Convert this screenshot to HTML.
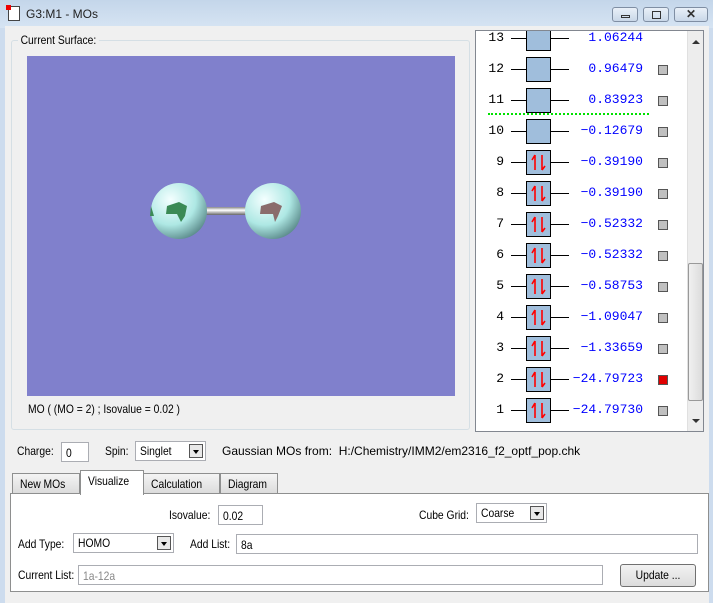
<!DOCTYPE html>
<html><head><style>
*{margin:0;padding:0;box-sizing:border-box}
body{width:713px;height:603px;overflow:hidden;background:#cddcee;font-family:"Liberation Sans",sans-serif;font-size:12px;color:#000;position:relative;white-space:nowrap}
.a{position:absolute}
.n{transform:scaleX(0.86);transform-origin:0 0}
.mono{font-family:"Liberation Mono",monospace;font-size:13px}
.inp{position:absolute;background:#fff;border:1px solid #abadb3;height:20px;padding:3px 4px;font-size:12px}
.inp span{display:inline-block;transform:scaleX(0.86);transform-origin:0 0}
.dd{position:absolute;width:14px;height:14px;border:1px solid #555;background:#e8e8e8;top:2px;right:2px}
.dd:after{content:"";position:absolute;left:3px;top:5px;border:3px solid transparent;border-top:4px solid #000}
.tab{position:absolute;top:473px;height:21px;background:linear-gradient(#f4f4f4,#dcdcdc);border:1px solid #8e8f8f;padding:3px 7px;font-size:12px}
.tab span{display:inline-block;transform:scaleX(0.86);transform-origin:0 0}
</style></head><body>
<div class="a" style="left:0;top:0;width:713px;height:28px;background:linear-gradient(#c4d6ea,#d6e4f3)"></div>
<div class="a" style="left:8px;top:6px;width:12px;height:15px;background:#fff;border:1px solid #444"></div>
<div class="a" style="left:6px;top:5px;width:5px;height:5px;background:#e00"></div>
<div class="a" style="left:26px;top:7px;font-size:12px;color:#222">G3:M1 - MOs</div>
<div class="a" style="left:612px;top:7px;width:26px;height:15px;border:1px solid #7f8ea3;border-radius:3px;background:linear-gradient(#e9f0f8,#c9d7e8)"><div class="a" style="left:8px;top:7px;width:9px;height:3px;border:1px solid #333"></div></div>
<div class="a" style="left:643px;top:7px;width:26px;height:15px;border:1px solid #7f8ea3;border-radius:3px;background:linear-gradient(#e9f0f8,#c9d7e8)"><div class="a" style="left:8px;top:3px;width:9px;height:8px;border:1px solid #333"></div></div>
<div class="a" style="left:674px;top:7px;width:34px;height:15px;border:1px solid #7f8ea3;border-radius:3px;background:linear-gradient(#e9f0f8,#c9d7e8);text-align:center;font-size:12px;font-weight:bold;line-height:13px;color:#333">✕</div>
<div class="a" style="left:5px;top:26px;width:704px;height:577px;background:#f0f0f0"></div>
<div class="a" style="left:11px;top:40px;width:459px;height:390px;border:1px solid #d5dfe5;border-radius:3px"></div>
<div class="a n" style="left:18px;top:33px;background:#f0f0f0;padding:0 3px">Current Surface:</div>
<div class="a" style="left:27px;top:56px;width:428px;height:340px;background:#8080cc"></div>
<svg class="a" style="left:27px;top:56px" width="428" height="340">
<defs><radialGradient id="g" cx="0.35" cy="0.3" r="0.75"><stop offset="0" stop-color="#f4ffff"/><stop offset="0.6" stop-color="#aee8e4"/><stop offset="1" stop-color="#5c8c8c"/></radialGradient>
<linearGradient id="r" x1="0" y1="0" x2="0" y2="1"><stop offset="0" stop-color="#888"/><stop offset="0.4" stop-color="#fff"/><stop offset="1" stop-color="#666"/></linearGradient></defs>
<rect x="175" y="151" width="48" height="8" fill="url(#r)"/>
<circle cx="152" cy="155" r="28" fill="url(#g)"/>
<circle cx="246" cy="155" r="28" fill="url(#g)"/>
<path d="M140 150 L152 146 L160 150 L158 160 L154 166 L150 158 L139 158Z" fill="#3a8a55"/>
<path d="M234 150 L247 146 L255 150 L251 160 L248 166 L246 158 L233 158Z" fill="#8a6c6c"/>
<path d="M124 150 L127 160 L123 160Z" fill="#3a8a55"/>
</svg>
<div class="a n" style="left:28px;top:402px">MO ( (MO = 2) ; Isovalue = 0.02 )</div>
<div class="a" style="left:475px;top:30px;width:229px;height:402px;background:#fff;border:1px solid #828790;overflow:hidden">
<div class="a" style="left:211px;top:0;width:17px;height:400px;background:#ededed;border-left:1px solid #e0e0e0"></div>
<div class="a" style="left:216px;top:9px;border:4px solid transparent;border-bottom:4px solid #333;border-top:0"></div>
<div class="a" style="left:216px;top:388px;border:4px solid transparent;border-top:4px solid #333;border-bottom:0"></div>
<div class="a" style="left:212px;top:232px;width:15px;height:138px;background:linear-gradient(90deg,#f0f0f0,#dcdcdc);border:1px solid #999;border-radius:2px"></div>
<div class="a" style="left:12px;top:82px;width:161px;border-top:2px dotted #00e000"></div>
<div id="rows"></div>
</div>
<script>
var v=["1.06244","0.96479","0.83923","-0.12679","-0.39190","-0.39190","-0.52332","-0.52332","-0.58753","-1.09047","-1.33659","-24.79723","-24.79730"];
var h="";
var arr='<svg width="23" height="23" style="position:absolute;left:0;top:0"><path d="M8 19 V4 M8 4 L5 9 M15 4 V19 M15 19 L18 15" stroke="#f00" stroke-width="1.6" fill="none"/></svg>';
for(var i=0;i<13;i++){var n=13-i,y=-5+31*i;
h+='<div class="a" style="left:0;top:'+(y+4)+'px;width:28px;text-align:right;font-family:Liberation Mono,monospace;font-size:13px">'+n+'</div>';
h+='<div class="a" style="left:35px;top:'+(y+12)+'px;width:58px;border-top:1px solid #000"></div>';
h+='<div class="a" style="left:50px;top:'+y+'px;width:25px;height:25px;background:#a0bedc;border:1px solid #000">'+(n<=9?arr:'')+'</div>';
h+='<div class="a mono" style="left:80px;top:'+(y+4)+'px;width:87px;text-align:right;color:#00f">'+v[i].replace('-','\u2212')+'</div>';
if(n<13)h+='<div class="a" style="left:182px;top:'+(y+8)+'px;width:10px;height:10px;background:'+(n==2?'#e00000':'#c0c0c0')+';border:1px solid #555"></div>';}
document.getElementById('rows').innerHTML=h;
</script>
<div class="a n" style="left:17px;top:444px">Charge:</div>
<div class="inp" style="left:61px;top:442px;width:28px"><span>0</span></div>
<div class="a n" style="left:105px;top:444px">Spin:</div>
<div class="inp" style="left:135px;top:441px;width:71px;padding-top:2px"><span>Singlet</span><div class="dd"></div></div>
<div class="a" style="left:222px;top:444px">Gaussian MOs from:&nbsp; H:/Chemistry/IMM2/em2316_f2_optf_pop.chk</div>
<div class="a" style="left:10px;top:493px;width:699px;height:99px;background:#fff;border:1px solid #8e8f8f"></div>
<div class="tab" style="left:12px;width:68px"><span>New MOs</span></div>
<div class="tab" style="left:143px;width:77px"><span>Calculation</span></div>
<div class="tab" style="left:220px;width:58px"><span>Diagram</span></div>
<div class="tab" style="left:80px;top:470px;width:64px;height:25px;background:#fff;border-bottom:none"><span>Visualize</span></div>
<div class="a n" style="left:169px;top:508px">Isovalue:</div>
<div class="inp" style="left:218px;top:505px;width:45px"><span>0.02</span></div>
<div class="a n" style="left:419px;top:508px">Cube Grid:</div>
<div class="inp" style="left:476px;top:503px;width:71px;padding-top:2px"><span>Coarse</span><div class="dd"></div></div>
<div class="a n" style="left:18px;top:537px">Add Type:</div>
<div class="inp" style="left:73px;top:533px;width:101px;padding-top:2px"><span>HOMO</span><div class="dd"></div></div>
<div class="a n" style="left:190px;top:537px">Add List:</div>
<div class="inp" style="left:236px;top:534px;width:462px"><span>8a</span></div>
<div class="a n" style="left:18px;top:568px">Current List:</div>
<div class="inp" style="left:78px;top:565px;width:525px;color:#888"><span>1a-12a</span></div>
<div class="a" style="left:620px;top:564px;width:76px;height:23px;border:1px solid #707070;border-radius:3px;background:linear-gradient(#f2f2f2,#dcdcdc);text-align:center;line-height:21px"><span style="display:inline-block;transform:scaleX(0.86)">Update ...</span></div>
</body></html>
